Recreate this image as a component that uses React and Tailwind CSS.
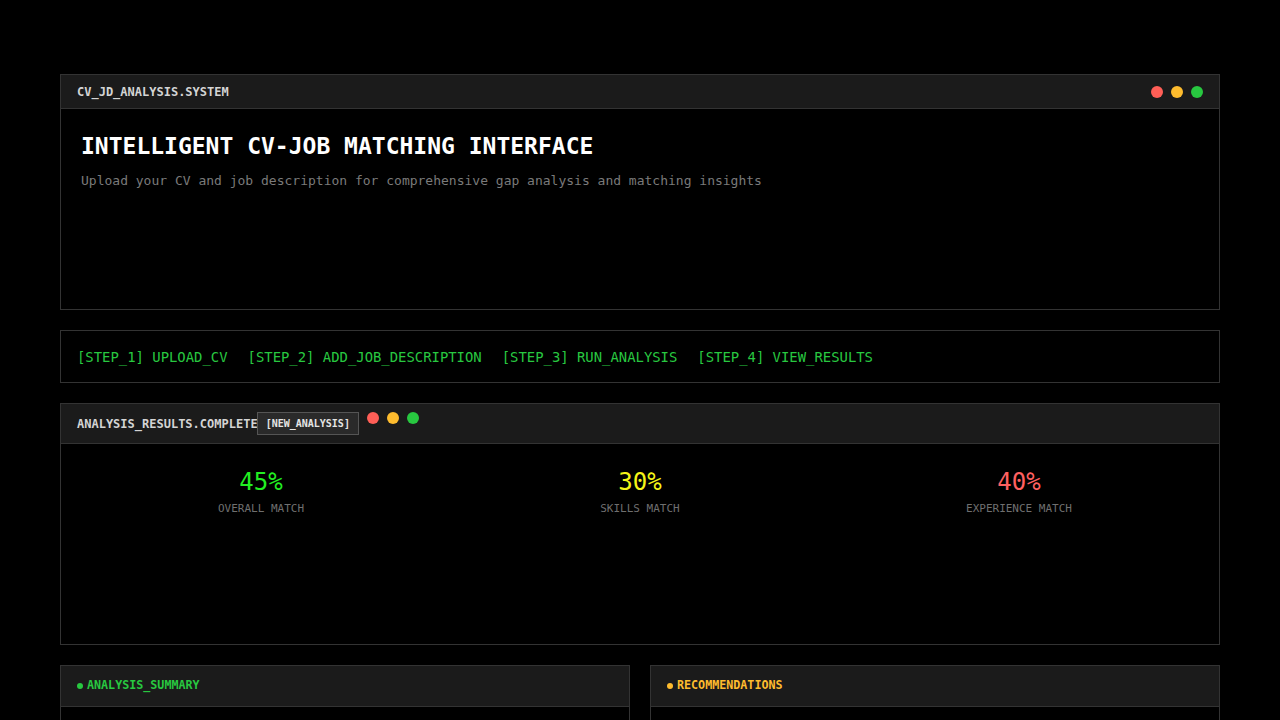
export default function App() {
  const Dots = () => (
    <div className="flex items-center gap-2">
      <span className="w-3 h-3 rounded-full bg-[#ff5f57]" />
      <span className="w-3 h-3 rounded-full bg-[#febc2e]" />
      <span className="w-3 h-3 rounded-full bg-[#28c840]" />
    </div>
  );
  const mono = { fontFamily: '"DejaVu Sans Mono", "Liberation Mono", monospace' };
  return (
    <div className="min-h-screen bg-black pt-[74px] px-[60px] pb-10" style={mono}>
      <div className="flex flex-col gap-5">
        {/* System card */}
        <div className="border border-[#333] bg-black">
          <div className="h-[34px] bg-[#1b1b1b] border-b border-[#333] flex items-center justify-between pl-4 pr-4">
            <span className="text-[12px] font-bold text-[#d4d4d4]">CV_JD_ANALYSIS.SYSTEM</span>
            <Dots />
          </div>
          <div className="min-h-[200px] p-5">
            <h1 className="text-[23px] leading-[32px] font-bold text-white mt-[1px]">INTELLIGENT CV-JOB MATCHING INTERFACE</h1>
            <p className="text-[13px] leading-5 text-[#7a7a7a] mt-[9px]">Upload your CV and job description for comprehensive gap analysis and matching insights</p>
          </div>
        </div>

        {/* Steps */}
        <div className="border border-[#333] bg-black h-[53px] flex items-center px-4 pt-[2px] gap-5 text-[13.9px] text-[#28c840]">
          <span>[STEP_1] UPLOAD_CV</span>
          <span>[STEP_2] ADD_JOB_DESCRIPTION</span>
          <span>[STEP_3] RUN_ANALYSIS</span>
          <span>[STEP_4] VIEW_RESULTS</span>
        </div>

        {/* Results */}
        <div className="border border-[#333] bg-black">
          <div className="h-[40px] bg-[#1b1b1b] border-b border-[#333] flex items-center pl-4">
            <span className="text-[12px] font-bold text-[#d4d4d4]">ANALYSIS_RESULTS.COMPLETE</span>
            <span className="-ml-[1px] text-[10px] font-bold text-[#e5e5e5] bg-[#2a2a2a] border border-[#555] px-2 h-[23px] flex items-center">[NEW_ANALYSIS]</span>
            <div className="ml-[8px] -mt-[12px]">
              <Dots />
            </div>
          </div>
          <div className="min-h-[200px] px-5 pt-[22px]">
            <div className="grid grid-cols-3 gap-[19px]">
              <div className="flex flex-col items-center">
                <span className="text-[24px] leading-[32px] text-[#22ee22]">45%</span>
                <span className="text-[11px] leading-4 mt-[3px] text-[#6f6f6f]">OVERALL MATCH</span>
              </div>
              <div className="flex flex-col items-center">
                <span className="text-[24px] leading-[32px] text-[#f5f518]">30%</span>
                <span className="text-[11px] leading-4 mt-[3px] text-[#6f6f6f]">SKILLS MATCH</span>
              </div>
              <div className="flex flex-col items-center">
                <span className="text-[24px] leading-[32px] text-[#ff6060]">40%</span>
                <span className="text-[11px] leading-4 mt-[3px] text-[#6f6f6f]">EXPERIENCE MATCH</span>
              </div>
            </div>
          </div>
        </div>

        {/* Bottom */}
        <div className="grid grid-cols-2 gap-5">
          <div className="border border-[#333] bg-black">
            <div className="h-[41px] bg-[#1b1b1b] border-b border-[#333] flex items-center pl-4 gap-1">
              <span className="w-[6px] h-[6px] rounded-full bg-[#28c840]" />
              <span className="text-[11.7px] font-bold text-[#28c840]">ANALYSIS_SUMMARY</span>
            </div>
            <div className="min-h-[200px]" />
          </div>
          <div className="border border-[#333] bg-black">
            <div className="h-[41px] bg-[#1b1b1b] border-b border-[#333] flex items-center pl-4 gap-1">
              <span className="w-[6px] h-[6px] rounded-full bg-[#febc2e]" />
              <span className="text-[11.7px] font-bold text-[#febc2e]">RECOMMENDATIONS</span>
            </div>
            <div className="min-h-[200px]" />
          </div>
        </div>
      </div>
    </div>
  );
}
